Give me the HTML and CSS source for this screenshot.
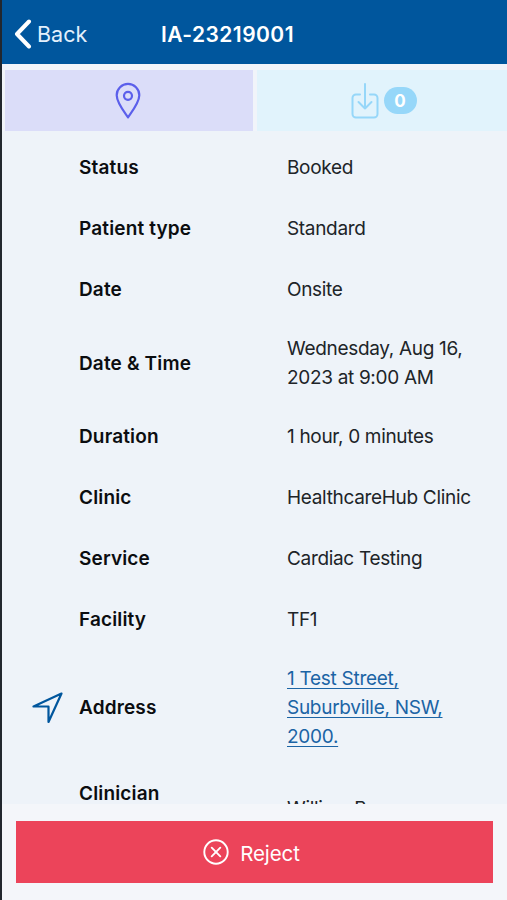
FILE: index.html
```html
<!DOCTYPE html>
<html lang="en">
<head>
<meta charset="utf-8">
<title>IA-23219001</title>
<link rel="stylesheet" href="styles.css">
</head>
<body>
<div class="app">
  <header class="header">
    <a class="back"><svg width="18" height="30" viewBox="0 0 18 30"><path d="M15 2.500 3 15l12 12.500"/></svg><span>Back</span></a>
    <h1 class="title">IA-23219001</h1>
  </header>
  <nav class="tabs">
    <div class="tab tab-location">
      <svg width="28" height="38" viewBox="0 0 28 38"><path d="M14 35.300C11.500 31.500 2.700 20.800 2.700 13.200A11.300 11.300 0 0 1 25.300 13.200C25.300 20.800 16.500 31.500 14 35.300Z"/><circle cx="14" cy="13.800" r="4"/></svg>
    </div>
    <div class="tab tab-files">
      <svg width="28" height="36" viewBox="0 0 28 36"><path d="M9 11.500H5a3.500 3.500 0 0 0-3.500 3.500v16A3.500 3.500 0 0 0 5 34.500h18a3.500 3.500 0 0 0 3.500-3.500V15a3.500 3.500 0 0 0-3.500-3.500h-4M14 1v24.500M7.500 19l6.500 6.500 6.500-6.500"/></svg>
      <span class="badge">0</span>
    </div>
  </nav>
  <main class="details">
    <div class="row"><div class="label">Status</div><div class="value">Booked</div></div>
    <div class="row"><div class="label">Patient type</div><div class="value">Standard</div></div>
    <div class="row"><div class="label">Date</div><div class="value">Onsite</div></div>
    <div class="row"><div class="label">Date &amp; Time</div><div class="value">Wednesday, Aug 16,<br>2023 at 9:00 AM</div></div>
    <div class="row"><div class="label">Duration</div><div class="value">1 hour, 0 minutes</div></div>
    <div class="row"><div class="label">Clinic</div><div class="value">HealthcareHub Clinic</div></div>
    <div class="row"><div class="label">Service</div><div class="value">Cardiac Testing</div></div>
    <div class="row"><div class="label">Facility</div><div class="value">TF1</div></div>
    <div class="row">
      <svg class="nav-icon" width="32" height="34" viewBox="0 0 32 34"><path d="M29.500 2.500 1.500 15.500H16.500V31Z"/></svg>
      <div class="label">Address</div><div class="value link">1 Test Street,<br>Suburbville, NSW,<br>2000.</div>
    </div>
    <div class="row row-tall"><div class="label">Clinician</div><div class="value">William Brown</div></div>
  </main>
  <footer class="footer">
    <button class="reject"><svg width="26" height="26" viewBox="0 0 26 26"><circle cx="13" cy="13" r="11.700"/><path d="m8.700 8.700 8.600 8.600m0-8.600-8.600 8.600"/></svg><span>Reject</span></button>
  </footer>
</div>
</body>
</html>
```

FILE: styles.css
```css
* { box-sizing: border-box; }
body { margin: 0; font-family: Inter, "Liberation Sans", sans-serif; }
svg { fill: none; stroke: currentColor; stroke-linecap: round; stroke-linejoin: round; flex: none; }
.app { height: 900px; display: flex; flex-direction: column; overflow: hidden; background: #eef3f9; border-left: 2px solid #22272e; }
.header { height: 64px; flex: none; display: grid; grid-template-columns: 159px 1fr; align-items: center; padding-top: 4px; background: #00569d; color: #fff; }
.back { display: flex; align-items: center; gap: 5px; padding-left: 12px; font-size: 21.500px; color: #e3f0fc; }
.back svg { color: #fff; stroke-width: 4; }
.title { margin: 0; font-size: 21px; font-weight: 600; letter-spacing: 0.45px; }
.tabs { height: 67px; flex: none; display: grid; grid-template-columns: 248px 1fr; gap: 4px; padding: 6px 0 0 3px; background: #f1f4fa; }
.tab { display: flex; align-items: center; justify-content: center; }
.tab-location { padding-right: 3px; background: #dbddf9; color: #5b5feb; }
.tab-location svg { stroke-width: 2.200; }
.tab-files { background: #e1f3fc; color: #96d7f9; gap: 5px; padding-left: 3px; }
.tab-files svg { stroke-width: 2; }
.badge { width: 33px; height: 27px; border-radius: 14px; display: flex; align-items: center; justify-content: center; background: #96d7f9; color: #fff; font-size: 17px; font-weight: 700; }
.details { flex: 1; min-height: 0; overflow: hidden; padding-top: 6px; font-size: 19px; line-height: 29px; color: #202428; }
.row { min-height: 61px; padding: 14px 0 14px 30px; display: grid; grid-template-columns: 47px 208px 1fr; align-items: center; }
.label { grid-column: 2; grid-row: 1; color: #0b0d10; font-weight: 600; letter-spacing: 0.15px; }
.value { grid-column: 3; grid-row: 1; white-space: nowrap; letter-spacing: -0.32px; }
.nav-icon { grid-column: 1; grid-row: 1; color: #00569d; stroke-width: 2.200; }
.link { color: #1b64a5; text-decoration: underline; text-decoration-thickness: 1px; text-underline-offset: 3px; letter-spacing: -0.28px; }
.row-tall { height: 86px; }
.row-tall .label { align-self: start; }
.footer { height: 96px; flex: none; padding: 17px 14px; background: #f4f6fa; }
.reject { width: 100%; height: 62px; border: 0; padding: 0 6px 0 0; display: flex; align-items: center; justify-content: center; gap: 11px; background: #ec445a; color: #fff; font-family: inherit; font-size: 20.500px; letter-spacing: -0.1px; }
.reject span { padding-top: 2px; }
.reject svg { stroke-width: 1.900; }
```
